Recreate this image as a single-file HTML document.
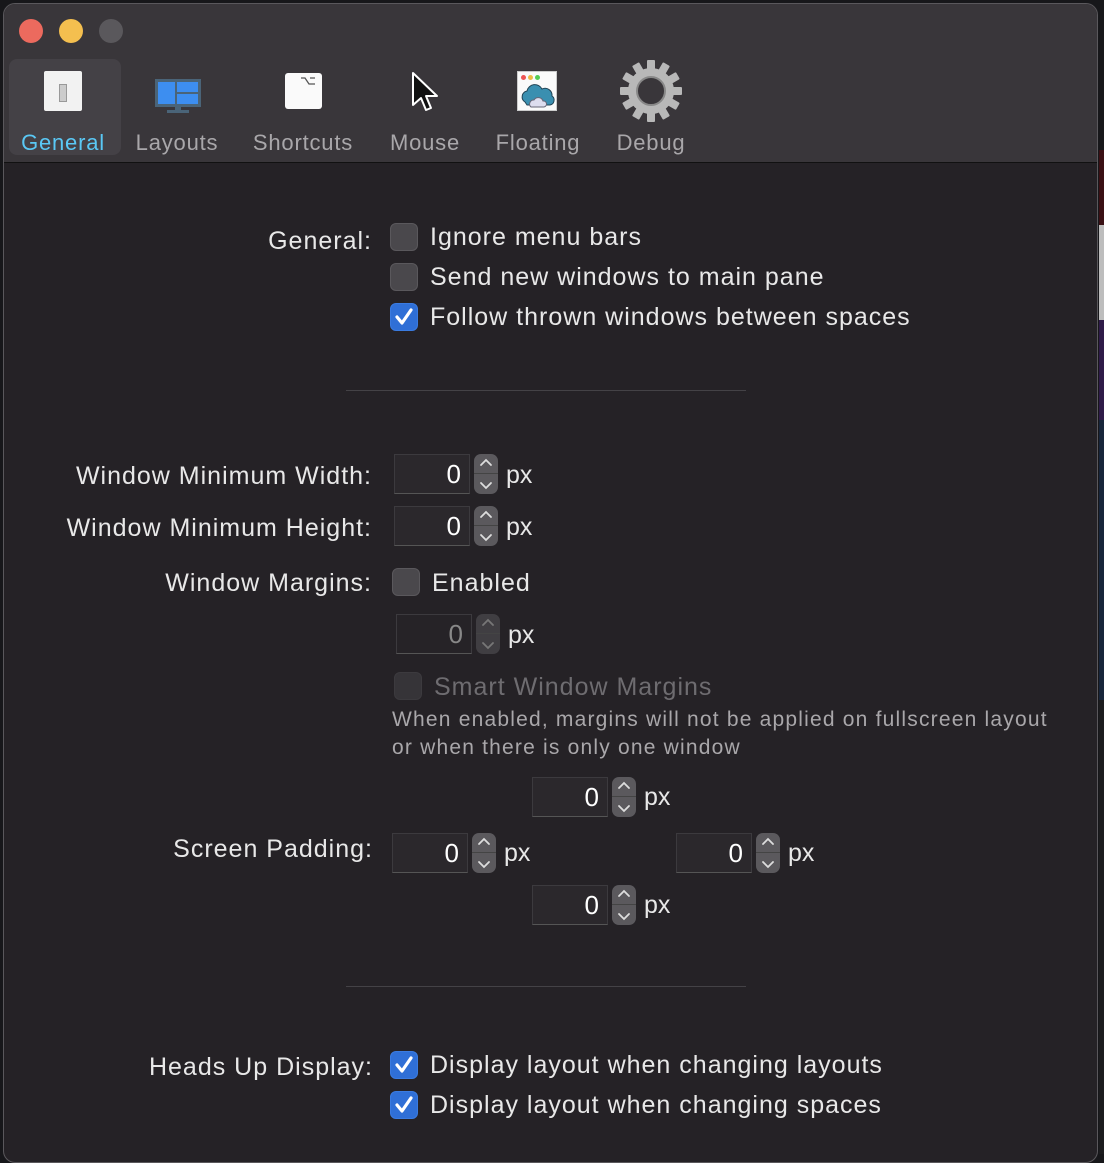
<!DOCTYPE html>
<html><head><meta charset="utf-8"><style>
*{margin:0;padding:0;box-sizing:border-box}
body{width:1104px;height:1154px;background:#17171a;position:relative;overflow:hidden;font-family:"Liberation Sans",sans-serif;color:#e6e6e6}
.strip{position:absolute;left:1099px;width:5px}
.win{position:absolute;left:3px;top:3px;width:1095px;height:1160px;background:#252226;border-radius:12px;border:1px solid #5a585c;overflow:hidden}
.tb{position:absolute;left:0;top:0;width:100%;height:159px;background:#39363a;border-bottom:1px solid #111}
.dot{position:absolute;top:15px;width:24px;height:24px;border-radius:50%}
.tab{position:absolute;top:124px;font-size:22px;letter-spacing:0.8px;color:#a9a7aa;text-align:center;width:130px;line-height:30px}
.a{position:absolute;white-space:nowrap}
.lbl{position:absolute;right:732px;font-size:25px;letter-spacing:1px;line-height:30px;white-space:nowrap;color:#e8e8e8}
.t{position:absolute;font-size:25px;letter-spacing:1px;line-height:30px;white-space:nowrap;color:#e8e8e8}
.cb{position:absolute;width:28px;height:28px;border-radius:6px;background:#4a484c;border:1px solid #5a585c}
.cb.on{background:#2f6fd6;border-color:#3a7be0}
.cb.dim{background:#363438;border-color:#3c3a3e}
.f{position:absolute;width:76px;height:40px;background:#2b282c;border:1px solid #3c3a3e;border-bottom-color:#555;font-size:26px;text-align:right;padding-right:8px;line-height:38px;color:#fff}
.st{position:absolute;width:24px;height:40px;border-radius:7px;background:#5b595d}
.st:after{content:"";position:absolute;left:0;right:0;top:19px;height:1px;background:#444}
.px{position:absolute;font-size:25px;line-height:30px;color:#e8e8e8}
.sep{position:absolute;left:346px;width:400px;height:1px;background:#444246}
</style></head><body>
<div class="strip" style="top:150px;height:75px;background:#3a1014"></div>
<div class="strip" style="top:225px;height:95px;background:#bdbdbd"></div>
<div class="strip" style="top:320px;height:100px;background:#2e1a48"></div>
<div class="strip" style="top:420px;height:280px;background:#17253a"></div>
<div class="strip" style="top:700px;height:454px;background:#1c1c1e"></div>
<div class="win">
<div class="tb">
<div class="dot" style="left:15px;background:#ec6a5e"></div>
<div class="dot" style="left:55px;background:#f4bf4f"></div>
<div class="dot" style="left:95px;background:#5a585c"></div>
<div style="position:absolute;left:5px;top:55px;width:112px;height:96px;border-radius:8px;background:#444146"></div>
<div style="position:absolute;left:40px;top:67px;width:38px;height:40px;background:#f2f2f2;border-radius:2px"></div>
<div style="position:absolute;left:55px;top:80px;width:8px;height:18px;background:#ccc;border:1px solid #999"></div>
<svg class="a" style="left:150px;top:74px" width="48" height="36"><rect x="1" y="1" width="46" height="28" fill="#4a6478"/><rect x="4" y="4" width="17" height="22" fill="#3d8ef0"/><rect x="23" y="4" width="21" height="10" fill="#3d8ef0"/><rect x="23" y="16" width="21" height="10" fill="#3d8ef0"/><rect x="21" y="29" width="6" height="4" fill="#4a6478"/><rect x="13" y="32" width="22" height="3" fill="#4a6478"/></svg>
<div style="position:absolute;left:281px;top:69px;width:37px;height:36px;background:#fafafa;border-radius:3px"></div>
<svg class="a" style="left:296px;top:72px" width="18" height="10"><path d="M1 2h4l4 6h6M10 2h5" stroke="#555" stroke-width="1.3" fill="none"/></svg>
<svg class="a" style="left:406px;top:66px" width="34" height="46"><path d="M3 3v32l8-7 5 12 5-2-5-12h11z" fill="#111" stroke="#fff" stroke-width="2" stroke-linejoin="round"/></svg>
<div style="position:absolute;left:513px;top:67px;width:40px;height:40px;background:#fafafa;border:1px solid #ccc"></div>
<div style="position:absolute;left:517px;top:71px;width:5px;height:5px;border-radius:50%;background:#e55"></div>
<div style="position:absolute;left:524px;top:71px;width:5px;height:5px;border-radius:50%;background:#eb4"></div>
<div style="position:absolute;left:531px;top:71px;width:5px;height:5px;border-radius:50%;background:#5c5"></div>
<svg class="a" style="left:515px;top:78px" width="38" height="28"><path d="M6 20a6 6 0 0 1 2-11 8 8 0 0 1 15-2 7 7 0 0 1 10 7 5 5 0 0 1-2 9H8z" fill="#3a8fb0" stroke="#245" stroke-width="1"/><path d="M12 25a4 4 0 0 1 3-7 5 5 0 0 1 9 1 3 3 0 0 1 1 6z" fill="#dde" stroke="#667" stroke-width="1"/></svg>
<svg class="a" style="left:615px;top:55px" width="64" height="64" viewBox="-32 -32 64 64"><g fill="#b8b8b8"><circle r="23"/><g id="t"><rect x="-4" y="-31" width="8" height="12" rx="1"/></g><use href="#t" transform="rotate(30)"/><use href="#t" transform="rotate(60)"/><use href="#t" transform="rotate(90)"/><use href="#t" transform="rotate(120)"/><use href="#t" transform="rotate(150)"/><use href="#t" transform="rotate(180)"/><use href="#t" transform="rotate(210)"/><use href="#t" transform="rotate(240)"/><use href="#t" transform="rotate(270)"/><use href="#t" transform="rotate(300)"/><use href="#t" transform="rotate(330)"/></g><circle r="14" fill="#39363a" stroke="#888" stroke-width="2"/></svg>
<div class="tab" style="left:-6px;color:#5ac8f5">General</div>
<div class="tab" style="left:108px">Layouts</div>
<div class="tab" style="left:234px">Shortcuts</div>
<div class="tab" style="left:356px">Mouse</div>
<div class="tab" style="left:469px">Floating</div>
<div class="tab" style="left:582px">Debug</div>
</div>
</div>
<div class="lbl" style="top:226px">General:</div>
<div class="cb" style="left:390px;top:223px"></div><div class="t" style="left:430px;top:222px">Ignore menu bars</div>
<div class="cb" style="left:390px;top:263px"></div><div class="t" style="left:430px;top:262px">Send new windows to main pane</div>
<div class="cb on" style="left:390px;top:303px"><svg width="26" height="26"><path d="M6 13l5 6 9-13" stroke="#fff" stroke-width="3.2" fill="none" stroke-linecap="round" stroke-linejoin="round"/></svg></div><div class="t" style="left:430px;top:302px">Follow thrown windows between spaces</div>
<div class="sep" style="top:390px"></div>

<div class="lbl" style="top:461px">Window Minimum Width:</div>
<div class="f" style="left:394px;top:454px">0</div><div class="st" style="left:474px;top:454px"></div><div class="px" style="left:506px;top:460px">px</div>
<div class="lbl" style="top:513px">Window Minimum Height:</div>
<div class="f" style="left:394px;top:506px">0</div><div class="st" style="left:474px;top:506px"></div><div class="px" style="left:506px;top:512px">px</div>
<div class="lbl" style="top:568px">Window Margins:</div>
<div class="cb" style="left:392px;top:568px"></div><div class="t" style="left:432px;top:568px">Enabled</div>
<div class="f" style="left:396px;top:614px;color:#888;background:#262327">0</div><div class="st" style="left:476px;top:614px;background:#403e42"></div><div class="px" style="left:508px;top:620px">px</div>
<div class="cb dim" style="left:394px;top:672px"></div><div class="t" style="left:434px;top:672px;color:#6e6c70">Smart Window Margins</div>
<div class="a" style="left:392px;top:706px;font-size:21px;letter-spacing:1.2px;line-height:28px;color:#a9a7aa">When enabled, margins will not be applied on fullscreen layout<br>or when there is only one window</div>

<div class="f" style="left:532px;top:777px">0</div><div class="st" style="left:612px;top:777px"></div><div class="px" style="left:644px;top:782px">px</div>
<div class="lbl" style="top:834px;right:731px">Screen Padding:</div>
<div class="f" style="left:392px;top:833px">0</div><div class="st" style="left:472px;top:833px"></div><div class="px" style="left:504px;top:838px">px</div>
<div class="f" style="left:676px;top:833px">0</div><div class="st" style="left:756px;top:833px"></div><div class="px" style="left:788px;top:838px">px</div>
<div class="f" style="left:532px;top:885px">0</div><div class="st" style="left:612px;top:885px"></div><div class="px" style="left:644px;top:890px">px</div>
<div class="sep" style="top:986px"></div>

<div class="lbl" style="top:1052px;right:731px">Heads Up Display:</div>
<div class="cb on" style="left:390px;top:1051px"><svg width="26" height="26"><path d="M6 13l5 6 9-13" stroke="#fff" stroke-width="3.2" fill="none" stroke-linecap="round" stroke-linejoin="round"/></svg></div><div class="t" style="left:430px;top:1050px">Display layout when changing layouts</div>
<div class="cb on" style="left:390px;top:1091px"><svg width="26" height="26"><path d="M6 13l5 6 9-13" stroke="#fff" stroke-width="3.2" fill="none" stroke-linecap="round" stroke-linejoin="round"/></svg></div><div class="t" style="left:430px;top:1090px">Display layout when changing spaces</div>

<svg class="a" style="left:0;top:0" width="1104" height="1154" pointer-events="none">
<g stroke="#ddd" stroke-width="1.8" fill="none" stroke-linecap="round">
<path d="M481 465l5-5 5 5M481 483l5 5 5-5"/><path d="M481 517l5-5 5 5M481 535l5 5 5-5"/>
<path d="M483 625l5-5 5 5M483 643l5 5 5-5" stroke="#777"/>
<path d="M619 788l5-5 5 5M619 806l5 5 5-5"/><path d="M479 844l5-5 5 5M479 862l5 5 5-5"/>
<path d="M763 844l5-5 5 5M763 862l5 5 5-5"/><path d="M619 896l5-5 5 5M619 914l5 5 5-5"/>
</g></svg>
</body></html>
